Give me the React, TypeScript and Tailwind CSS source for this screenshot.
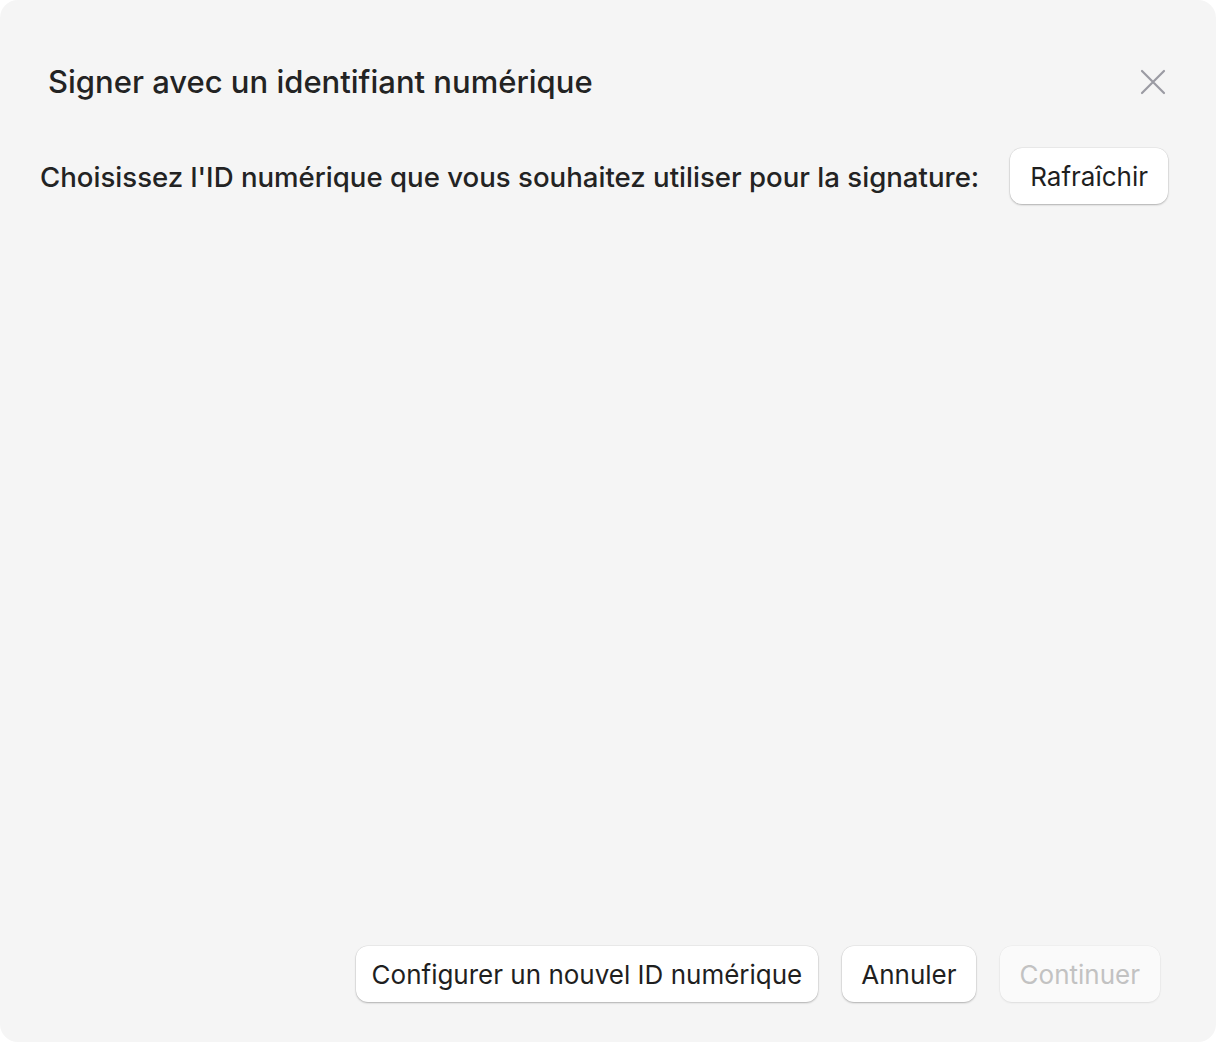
import React from "react";

const font = { fontFamily: "Inter, 'Noto Sans', sans-serif" };

function Btn({
  children,
  disabled,
  className = "px-5",
}: {
  children: React.ReactNode;
  disabled?: boolean;
  className?: string;
}) {
  return (
    <button
      disabled={disabled}
      className={`h-14 rounded-xl text-[26px] ${className} ${
        disabled
          ? "text-[#c2c2c2] bg-[#fafafa] shadow-[0_1px_2px_rgba(0,0,0,0.08),0_0_0_0.5px_rgba(0,0,0,0.04)]"
          : "text-[#1f1f1f] bg-white shadow-[0_1px_2px_rgba(0,0,0,0.25),0_0_0_0.5px_rgba(0,0,0,0.08)]"
      }`}
    >
      {children}
    </button>
  );
}

export default function App() {
  return (
    <div className="w-[1216px] h-[1042px] bg-white" style={font}>
      <div className="w-full h-full rounded-[18px] bg-[#f5f5f5] flex flex-col">
        <div className="flex items-center justify-between pl-12 pr-[50px] pt-[62px]">
          <h1 className="text-[31px] font-medium text-[#232323] leading-10">Signer avec un identifiant numérique</h1>
          <svg width="26" height="26" viewBox="0 0 26 26" className="text-[#9b9ba3]">
            <path d="M2 2 L24 24 M24 2 L2 24" stroke="currentColor" strokeWidth="2.2" strokeLinecap="round" />
          </svg>
        </div>
        <div className="flex items-center justify-between pl-10 pr-12 mt-[46px]">
          <p className="text-[27.6px] font-medium text-[#232323] pt-1">
            Choisissez l'ID numérique que vous souhaitez utiliser pour la signature:
          </p>
          <Btn>Rafraîchir</Btn>
        </div>
        <div className="flex-1" />
        <div className="flex justify-end gap-6 pr-14 pb-10">
          <Btn className="px-4">Configurer un nouvel ID numérique</Btn>
          <Btn className="px-[19px]">Annuler</Btn>
          <Btn disabled>Continuer</Btn>
        </div>
      </div>
    </div>
  );
}
